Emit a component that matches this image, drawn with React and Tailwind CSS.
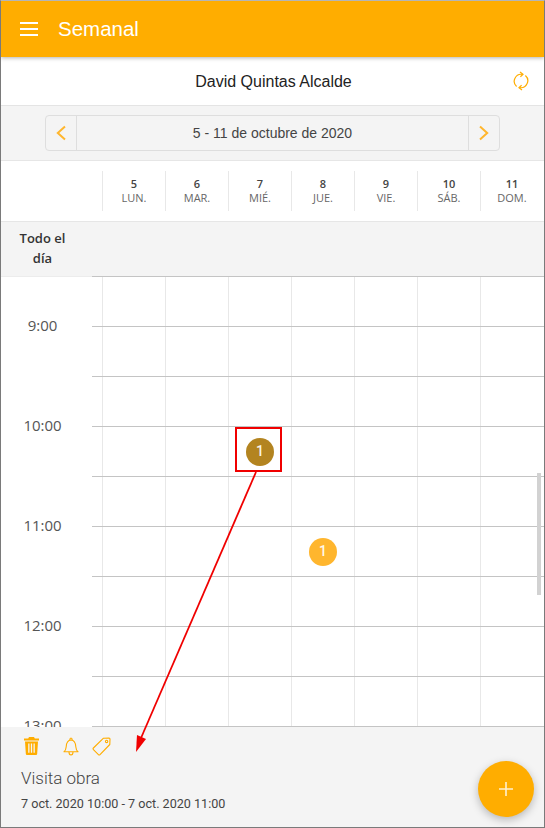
import React from 'react';

const DAYS = [
  ['5', 'LUN.'],
  ['6', 'MAR.'],
  ['7', 'MIÉ.'],
  ['8', 'JUE.'],
  ['9', 'VIE.'],
  ['10', 'SÁB.'],
  ['11', 'DOM.'],
];
const HOURS = ['9:00', '10:00', '11:00', '12:00', '13:00'];
const ROWS = [0, 1, 2, 3, 4, 5, 6, 7, 8];

// row/day of the event bubbles
const EVENTS = { '3-2': 'bg-[#b38420]', '5-3': 'bg-[#ffb62e]' };

function Chevron({ left }) {
  return (
    <svg width="12" height="16" viewBox="0 0 12 16" fill="none" stroke="#ffb62e" strokeWidth="2">
      <path d={left ? 'M10 1.500 2.800 8l7.200 6.500' : 'M2 1.500 9.200 8 2 14.500'} />
    </svg>
  );
}

function SyncIcon() {
  return (
    <svg width="16" height="20" viewBox="0 0 16 20" fill="none" stroke="#ffad00" strokeWidth="1.200">
      <path d="M9.500 3.400A7 7 0 0 0 3.600 15.500" />
      <path d="M6.500 16.600A7 7 0 0 0 12.400 4.500" />
      <path d="M7 1l3 2.400-2.600 2.400" />
      <path d="M9 19l-3-2.400 2.600-2.400" />
    </svg>
  );
}

function TrashIcon() {
  return (
    <svg width="15" height="18" viewBox="0 0 15 18" fill="#ffad00">
      <path d="M5 0h5l.8 1.600H15v1.900H0V1.600h4.200z" />
      <path fillRule="evenodd" d="M1 4.600h13l-.8 11.800c0 .9-.7 1.600-1.600 1.600H3.400c-.9 0-1.600-.7-1.600-1.600zM4.200 6.600v9.200h1.300V6.600zm2.650 0v9.200h1.300V6.600zm2.650 0v9.200h1.300V6.600z" />
    </svg>
  );
}

function BellIcon() {
  return (
    <svg width="16" height="19" viewBox="0 0 16 19" fill="none" stroke="#ffad00" strokeWidth="1.100" strokeLinejoin="round">
      <path d="M1 14.800c1.600-1.200 2-2.600 2.200-5C3.400 6.200 4.600 3.200 8 3c3.400.2 4.600 3.200 4.800 6.800.2 2.400.6 3.800 2.200 5z" />
      <path d="M6.800 3.100C6.800 2 7.200 1 8 1s1.200 1 1.200 2.100" />
      <path d="M6 15c0 1.700.9 3 2 3s2-1.300 2-3" />
    </svg>
  );
}

function TagIcon() {
  return (
    <svg width="19" height="19" viewBox="0 0 19 19" fill="none" stroke="#ffad00" strokeWidth="1.100" strokeLinejoin="round">
      <path d="M11.500 1.200 17 1c.6 0 1 .4 1 1l-.2 5.500L8 17.600c-.5.5-1.100.5-1.600 0l-5-5c-.5-.5-.5-1.100 0-1.600z" />
      <circle cx="14.600" cy="4.400" r="1.200" />
    </svg>
  );
}

export default function App() {
  return (
    <div className="relative flex h-[828px] w-[545px] flex-col overflow-hidden border border-[#7a7a7a] border-t-[#b5b5b5] bg-white font-['Liberation_Sans',sans-serif]">
      <header className="z-10 flex h-[56px] shrink-0 items-center bg-[#ffad00] pl-[19px] shadow-[0_1px_4px_rgba(0,0,0,0.3)]">
        <div className="flex w-[18px] flex-col gap-[4px]">
          <span className="h-[2px] bg-white" />
          <span className="h-[2px] bg-white" />
          <span className="h-[2px] bg-white" />
        </div>
        <h1 className="ml-[20px] text-[20.500px] text-white">Semanal</h1>
      </header>

      <div className="relative flex h-[49px] shrink-0 items-center justify-center border-b border-[#e4e4e4] pl-[2px] pt-[1px] text-[16px] text-[#222]">
        David Quintas Alcalde
        <span className="absolute right-[15px] top-[14px]"><SyncIcon /></span>
      </div>

      <div className="flex h-[55px] shrink-0 items-center justify-center border-b border-[#e6e6e6] bg-[#f4f4f4] pr-[1px]">
        <div className="flex h-[36px] w-[455px] items-center rounded-[4px] border border-[#dedede] text-[14px] text-[#444]">
          <button className="flex h-full w-[31px] items-center justify-center border-r border-[#dedede]"><Chevron left /></button>
          <span className="flex-1 pl-[1px] text-center">5 - 11 de octubre de 2020</span>
          <button className="flex h-full w-[31px] items-center justify-center border-l border-[#dedede]"><Chevron /></button>
        </div>
      </div>

      <div className="flex h-[61px] shrink-0 items-center border-b border-[#e6e6e6] pl-[101px] font-['Open_Sans',sans-serif] text-[#444]">
        {DAYS.map(([num, name]) => (
          <div key={num} className="flex h-[40px] w-[63px] flex-col items-center justify-center border-l border-[#e8e8e8] text-[11px] leading-[14px]">
            <span className="font-semibold">{num}</span>
            <span className="text-[#666]">{name}</span>
          </div>
        ))}
      </div>

      <div className="flex h-[54px] shrink-0 bg-[#f4f4f4] font-['Open_Sans',sans-serif] text-[13px] font-semibold leading-[20px] text-[#333]">
        <div className="flex w-[83px] items-center justify-center pb-[2px] text-center">
          <span className="w-[56px]">Todo el día</span>
        </div>
      </div>

      <div className="flex min-h-0 flex-1 overflow-hidden">
        <div className="relative flex w-[91px] shrink-0 flex-col border-t border-[#ececec] font-['Open_Sans',sans-serif] text-[15px] text-[#555]">
          {HOURS.map((h, i) => (
            <div key={h} className={`flex h-[100px] shrink-0 items-center justify-center pr-[8px] ${i === 0 ? '-mt-[2px]' : ''}`}>{h}</div>
          ))}
        </div>
        <div className="relative flex flex-1 flex-col border-t border-[#c4c4c4]">
          {ROWS.map((r) => (
            <div key={r} className="flex h-[50px] shrink-0 border-b border-[#c4c4c4]">
              <div className="w-[10px] shrink-0" />
              {DAYS.map(([num], d) => (
                <div key={num} className="flex w-[63px] items-center justify-center border-l border-[#e8e8e8]">
                  {EVENTS[`${r}-${d}`] && (
                    <span className={`flex h-[28px] w-[28px] items-center justify-center rounded-full font-['Roboto',sans-serif] text-[14px] font-medium text-white/90 ${EVENTS[`${r}-${d}`]}`}>1</span>
                  )}
                </div>
              ))}
            </div>
          ))}
          <div className="absolute left-[445px] top-[196px] h-[122px] w-[4px] bg-[#d2d2d2]" />
        </div>
      </div>

      <footer className="relative flex h-[100px] shrink-0 flex-col bg-[#f4f4f4] pl-[20px] font-['Roboto',sans-serif] text-[#444]">
        <div className="mt-[9px] flex h-[20px] items-center pl-[3px]">
          <TrashIcon />
          <span className="ml-[24px]"><BellIcon /></span>
          <span className="ml-[13px]"><TagIcon /></span>
        </div>
        <div className="mt-[12px] text-[17px] font-light leading-[20px]">Visita obra</div>
        <div className="mt-[8px] text-[12.600px] leading-[16px]">7 oct. 2020 10:00 - 7 oct. 2020 11:00</div>
        <button className="absolute right-[10px] top-[34px] flex h-[56px] w-[56px] items-center justify-center rounded-full bg-[#ffad00] shadow-[0_3px_8px_rgba(0,0,0,0.25)]">
          <svg width="14" height="14" viewBox="0 0 14 14" stroke="#fff0d0" strokeWidth="1.600"><path d="M7 0v14M0 7h14" /></svg>
        </button>
      </footer>

      {/* red annotation drawn over the screenshot */}
      <div className="absolute left-[234px] top-[426px] h-[45px] w-[47px] border-2 border-[#f00000]" />
      <svg className="absolute left-[-1px] top-[-1px]" width="545" height="828" fill="none">
        <path d="M256 472 141 738" stroke="#f00000" strokeWidth="1.800" />
        <path d="M136 752l1-17 9 4z" fill="#f00000" />
      </svg>
    </div>
  );
}
